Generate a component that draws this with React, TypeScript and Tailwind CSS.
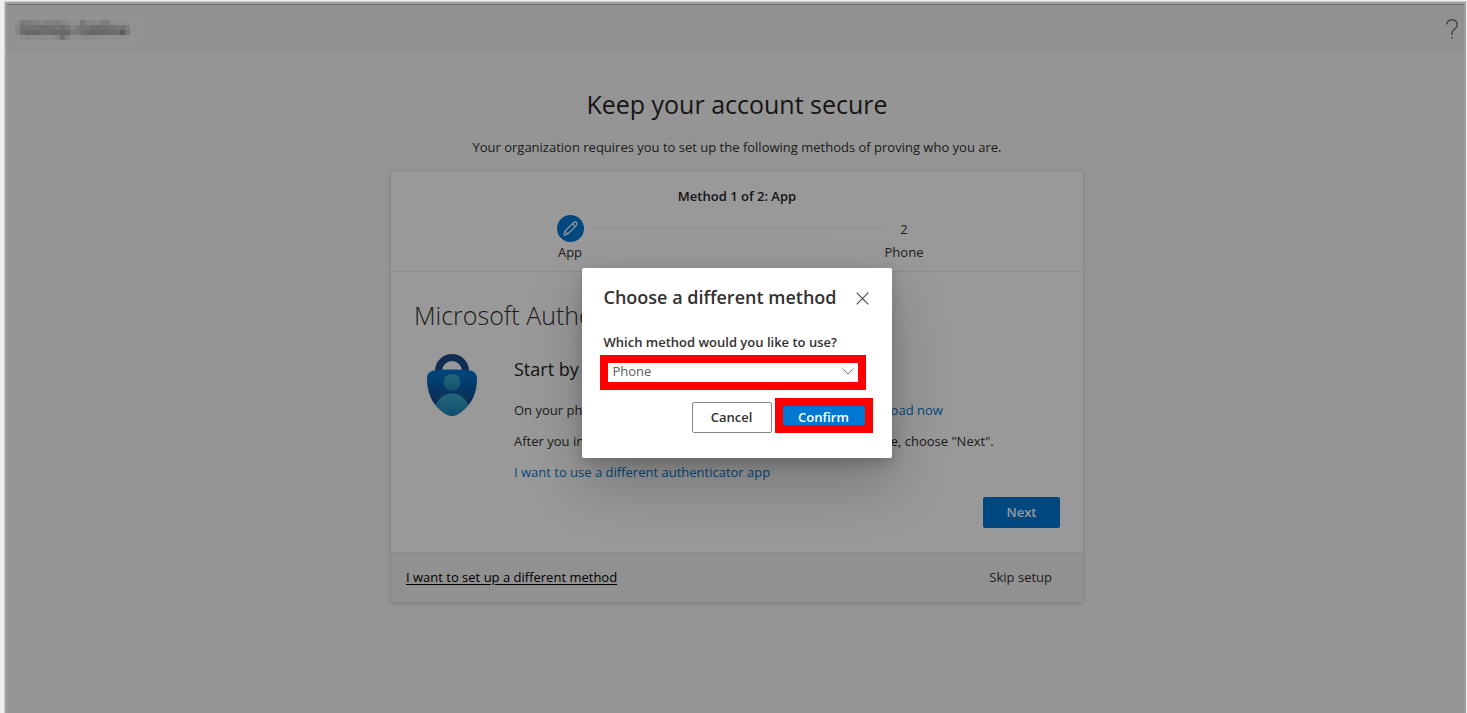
const BLURRED_NAME = [
  [4, 16, 14, 12, 10, 8, 12, 10, 14, 8, 4, 2, 2, 16, 8, 6, 6, 14, 14, 4, 2, 2, 2],
  [8, 22, 20, 22, 22, 24, 24, 24, 20, 24, 18, 10, 16, 22, 20, 24, 26, 24, 24, 22, 20, 20, 12],
  [8, 24, 28, 30, 28, 24, 26, 26, 26, 28, 28, 16, 16, 22, 26, 30, 28, 28, 26, 26, 24, 36, 18],
  [0, 4, 6, 4, 4, 4, 2, 4, 8, 22, 10, 2, 2, 4, 4, 4, 4, 4, 2, 2, 2, 2, 0],
];

function BlurredName() {
  return (
    <svg width="128" height="32" viewBox="0 0 128 32" role="img" aria-label="Organization name" shapeRendering="crispEdges">
      <rect width="128" height="32" fill="#f6f4f2" />
      {BLURRED_NAME.map((row, y) =>
        row.map((value, x) => (
          <rect key={`${x}-${y}`} x={3 + x * 5} y={7 + y * 5} width="5" height="5" fill="#000" fillOpacity={value / 100} />
        )),
      )}
    </svg>
  );
}

function HelpIcon() {
  return (
    <svg width="12" height="20" viewBox="0 0 12 20" fill="none" stroke="#606060" strokeWidth="1.3" aria-hidden="true">
      <path d="M.8 5.6C.8 2.6 3 .8 6 .8s5.200 1.800 5.200 4.700c0 2.200-1.100 3.400-2.800 4.800C6.700 11.700 6 12.500 6 14.300V16" />
      <path d="M6 18v1.600" strokeWidth="1.500" />
    </svg>
  );
}

function PencilIcon() {
  return (
    <svg width="15" height="15" viewBox="0 0 15 15" fill="none" stroke="#fff" strokeWidth="1.100" strokeLinejoin="round" aria-hidden="true">
      <path d="M.8 14.200 2 10.200 10.700 1.500a1.950 1.950 0 0 1 2.800 2.800L4.800 13z" />
      <path d="m9.500 2.700 2.800 2.800M2 10.200 4.800 13" />
    </svg>
  );
}

function AuthenticatorIcon() {
  return (
    <svg width="50" height="62" viewBox="0 0 50 62" aria-hidden="true">
      <defs>
        <linearGradient id="shield" x1="0" y1="0" x2="0" y2="1">
          <stop offset="0" stopColor="#0078d4" />
          <stop offset="0.700" stopColor="#114a8b" />
        </linearGradient>
        <linearGradient id="head" x1="0" y1="0" x2="0" y2="1">
          <stop offset="0" stopColor="#3fa9c9" />
          <stop offset="1" stopColor="#1f87b8" />
        </linearGradient>
        <linearGradient id="body" x1="0" y1="0" x2="0" y2="1">
          <stop offset="0" stopColor="#3fa9c9" />
          <stop offset="0.650" stopColor="#1787bd" />
        </linearGradient>
        <clipPath id="shield-clip">
          <path d="M25 15.500c7 0 13 .3 18 1.100 4.400.7 7 3.400 7 8.400 0 13-4.500 24-14 31.500C32 59.800 28.500 62 25 62s-7-2.200-11-5.500C4.500 49 0 38 0 25c0-5 2.600-7.700 7-8.400 5-.8 11-1.100 18-1.100z" />
        </clipPath>
      </defs>
      <path d="M11.500 19v-2a13.500 13.500 0 0 1 27 0v2" fill="none" stroke="#1b4b8a" strokeWidth="7" />
      <g clipPath="url(#shield-clip)">
        <rect y="15" width="50" height="47" fill="url(#shield)" />
        <circle cx="25" cy="28.500" r="8.500" fill="url(#head)" />
        <circle cx="25" cy="57" r="17.500" fill="url(#body)" />
      </g>
    </svg>
  );
}

function Page() {
  return (
    <div>
      <header className="flex h-[49px] items-center justify-between bg-[#f5f2ee] pr-1.5 pl-[5px]">
        <BlurredName />
        <button type="button" aria-label="Help">
          <HelpIcon />
        </button>
      </header>

      <div className="pl-[3px]">
        <main className="mx-auto flex w-full max-w-[692px] flex-col pt-[31px]">
          <h1 className="text-center text-[25px] leading-10 text-[#262626]">Keep your account secure</h1>
          <p className="mt-[13px] text-center leading-5">
            Your organization requires you to set up the following methods of proving who you are.
          </p>

          <section className="mt-[14px] bg-white shadow-[0_1px_4px_rgba(0,0,0,0.200)]">
            <div className="border-b border-[#ececec] pt-[15px] pb-[9px]">
              <h2 className="text-center leading-5 font-semibold text-[#262626]">Method 1 of 2: App</h2>
              <ol className="mx-auto mt-[9px] flex w-[374px] max-w-full">
                <li className="flex w-10 flex-col items-center">
                  <span className="flex size-[27px] items-center justify-center rounded-full bg-[#0078d4]">
                    <PencilIcon />
                  </span>
                  <span className="leading-5">App</span>
                </li>
                <li aria-hidden="true" className="mt-[13px] ml-[3px] h-px flex-1 bg-[#ececec]" />
                <li className="flex w-10 flex-col items-center">
                  <span className="flex h-[27px] items-center pt-0.5">2</span>
                  <span className="leading-5">Phone</span>
                </li>
              </ol>
            </div>

            <div className="px-[23px] pt-[23px] pb-6">
              <h2 className="text-[25px] leading-10 font-light">Microsoft Authenticator</h2>
              <div className="mt-[19px] flex">
                <div className="w-[100px] shrink-0 pl-[13px]">
                  <AuthenticatorIcon />
                </div>
                <div>
                  <h3 className="text-[18px] leading-[30px] text-[#262626]">Start by getting the app</h3>
                  <p className="mt-4 leading-5">
                    On your phone, install the Microsoft Authenticator app.{" "}
                    <a href="#download" className="text-[#0078d4]">
                      Download now
                    </a>
                  </p>
                  <p className="mt-[11px] leading-5">
                    After you install the Microsoft Authenticator app on your device, choose "Next".
                  </p>
                  <p className="mt-[11px] leading-5">
                    <a href="#other-app" className="text-[#0078d4]">
                      I want to use a different authenticator app
                    </a>
                  </p>
                </div>
              </div>
              <div className="mt-[15px] flex justify-end">
                <button type="button" className="h-[31px] w-[77px] rounded-xs bg-[#0078d4] font-semibold text-white">
                  Next
                </button>
              </div>
            </div>

            <footer className="flex h-[50px] items-center justify-between border-t border-[#e6e6e6] bg-[#f2f2f2] pr-[31px] pl-[15px]">
              <a href="#different-method" className="text-black underline underline-offset-2">
                I want to set up a different method
              </a>
              <a href="#skip">Skip setup</a>
            </footer>
          </section>
        </main>
      </div>
    </div>
  );
}

function MethodDialog() {
  return (
    <div
      role="dialog"
      aria-modal="true"
      aria-labelledby="dialog-title"
      className="w-[310px] rounded-xs bg-white pt-[17px] pr-[23px] pb-[25px] pl-[22px] shadow-[0_26px_58px_rgba(0,0,0,0.220),0_5px_14px_rgba(0,0,0,0.180)]"
    >
      <div className="flex items-center justify-between">
        <h2 id="dialog-title" className="text-[18px] leading-6 font-semibold">
          Choose a different method
        </h2>
        <button type="button" aria-label="Close" className="pt-1">
          <svg width="13" height="13" viewBox="0 0 13 13" stroke="#444" strokeWidth="1.100" aria-hidden="true">
            <path d="m.7.7 11.600 11.600M12.300.7.7 12.300" />
          </svg>
        </button>
      </div>

      <label htmlFor="method" className="mt-[23px] block leading-5 font-semibold">
        Which method would you like to use?
      </label>
      <div className="relative mt-[7px] mr-[7px] h-[27px]">
        <select id="method" defaultValue="Phone" className="h-full w-full appearance-none bg-white pl-[9px] text-[#605e5c]">
          <option>Phone</option>
          <option>Email</option>
        </select>
        <svg
          width="12"
          height="7"
          viewBox="0 0 12 7"
          fill="none"
          stroke="#777"
          className="pointer-events-none absolute top-[9px] right-2"
          aria-hidden="true"
        >
          <path d="m.5.5 5.500 5.500L11.500.5" />
        </svg>
        <span className="pointer-events-none absolute -inset-1 border-8 border-[#ff0000]" />
      </div>

      <div className="mt-4 flex justify-end gap-[7px]">
        <button type="button" className="h-[31px] w-20 rounded-xs border border-[#8a8886] pt-0.5 font-semibold">
          Cancel
        </button>
        <div className="relative">
          <button type="button" className="h-[31px] w-[90px] bg-[#0078d4] pt-0.5 font-semibold text-white">
            Confirm
          </button>
          <span className="pointer-events-none absolute -inset-x-1 -top-1 bottom-0 border-8 border-[#ff0000]" />
        </div>
      </div>
    </div>
  );
}

export default function App() {
  return (
    <div className="flex min-h-screen bg-[#efefef] pt-px pl-1 font-['Open_Sans','Noto_Sans',sans-serif] text-[13px] text-[#323130]">
      <div className="flex flex-1 border-t border-l border-[#cfcfcf] pr-px">
        <div className="relative flex-1 border-2 border-b-0 border-[#a0a0a0] bg-[#f8f8f8]">
          <Page />
          <div className="absolute inset-0 grid place-items-center border-t border-[#6e6f6f] bg-black/40 pt-[7px] pl-0.5">
            <MethodDialog />
          </div>
        </div>
      </div>
    </div>
  );
}
